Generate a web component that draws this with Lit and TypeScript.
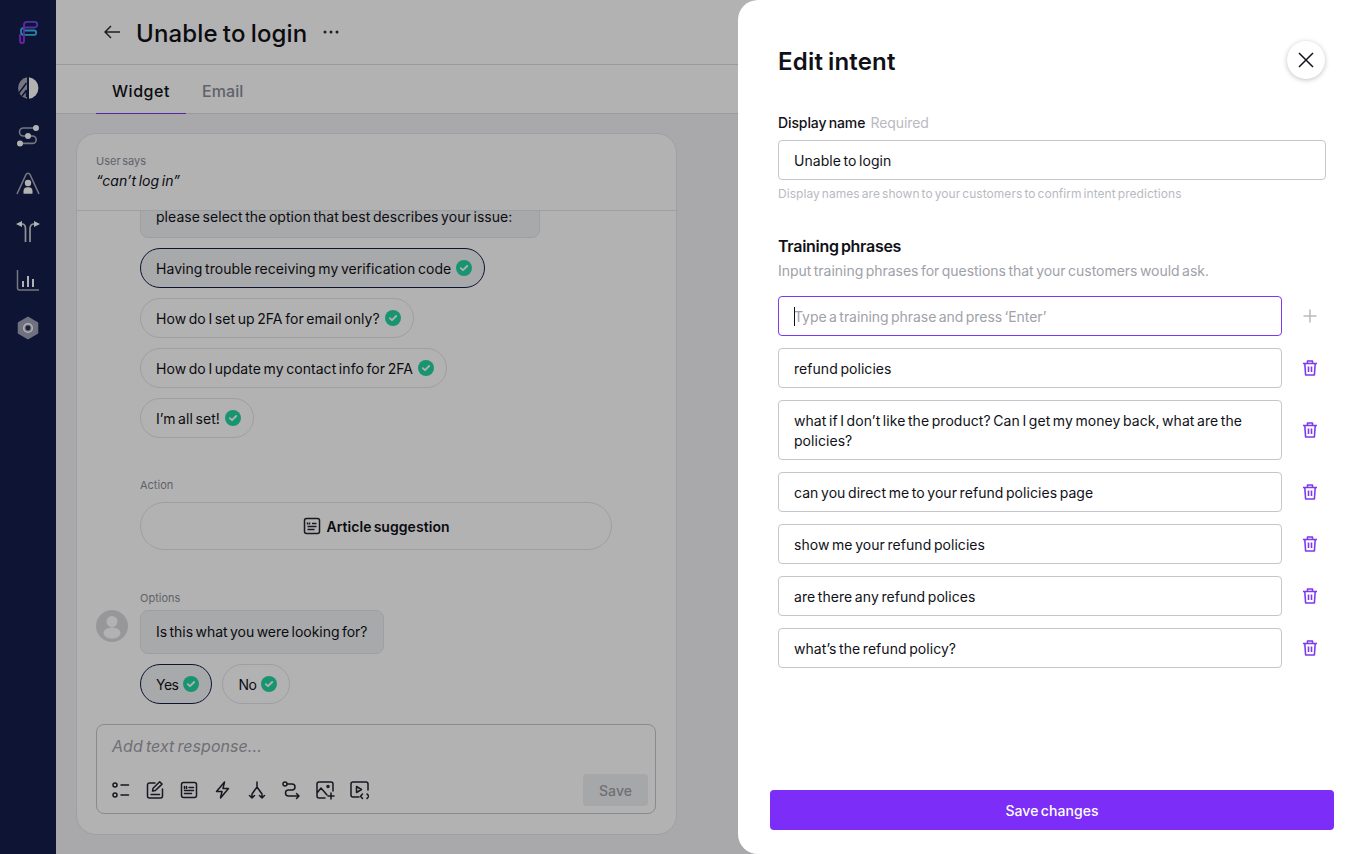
import { LitElement, html, css, svg } from 'lit';
import { customElement } from 'lit/decorators.js';
import { classMap } from 'lit/directives/class-map.js';

const check = html`<svg class="check" width="16" height="16" viewBox="0 0 16 16">
	<circle cx="8" cy="8" r="8" fill="#24d4a2"></circle>
	<path d="M4.8 8.2 7 10.2 11.2 6" fill="none" stroke="#fff" stroke-width="1.8" stroke-linecap="round" stroke-linejoin="round"></path>
</svg>`;

const trash = html`<svg width="16" height="16" viewBox="0 0 16 16" fill="none" stroke="#7c3aed" stroke-width="1.6" stroke-linejoin="round">
	<path d="M1 3.500h14M5.500 3.500V1h5v2.500M2.800 3.500l.8 11.500h8.800l.8-11.500M6.500 6.500v5.500M9.500 6.500v5.500"></path>
</svg>`;

const articleIcon = svg`<rect x="2.500" y="2.500" width="15" height="15" rx="2"></rect><path d="M5.500 6.500v2M7.500 6.500v2M10 7.500h4.500M5.500 10.500h9M5.500 13.500h7"></path>`;

const navIcons = [
	svg`<path d="M11 1.200A11 11 0 0 0 11 22.800Z" fill="#a8aab8"></path><path d="M13 1.200A10.900 10.900 0 0 1 13 22.800Z" fill="#fff"></path><path d="M10.500 7 3 17M10.500 14 6 20M10.500 14v7" stroke="#151e49" stroke-width="1.500" fill="none"></path>`,
	svg`<path d="M20 4H7.500a4 4 0 0 0 0 8H16.500a3.700 3.700 0 0 1 0 7.400H4" fill="none" stroke="#a8aab8" stroke-width="1.600"></path><circle cx="20" cy="4" r="3" fill="#fff"></circle><circle cx="12" cy="12" r="3" fill="#fff"></circle><circle cx="4" cy="19.400" r="3" fill="#fff"></circle>`,
	svg`<path d="M1 22 10 2.500a2.200 2.200 0 0 1 4 0L23 22" fill="none" stroke="#a8aab8" stroke-width="1.600"></path><circle cx="12" cy="11" r="3.200" fill="#fff"></circle><path d="M7.500 21.800v-2.600a4 4 0 0 1 4-4h1a4 4 0 0 1 4 4v2.600Z" fill="#fff"></path>`,
	svg`<path d="M0 4 6 1v6ZM24 4l-6-3v6Z" fill="#fff"></path><path d="M9.500 22V9Q9.500 4 6 4M14 22V9Q14 4 18 4" fill="none" stroke="#d0d1d8" stroke-width="1.700"></path>`,
	svg`<path d="M1.500 2v18a2 2 0 0 0 2 2H23" fill="none" stroke="#a8aab8" stroke-width="1.500"></path><path d="M7 13v6M12 8v11M17 11v8" fill="none" stroke="#fff" stroke-width="2"></path>`,
	svg`<path d="M12 1.500 21.500 6.800v10.400L12 22.500 2.500 17.200V6.800Z" fill="#a0a3b8" stroke="#a0a3b8" stroke-width="1.500" stroke-linejoin="round"></path><circle cx="12" cy="12" r="4.300" fill="none" stroke="#fff" stroke-width="1.600"></circle><circle cx="12" cy="12" r="2.400" fill="#2a2f4e"></circle>`,
];

const toolIcons = [
	svg`<circle cx="4" cy="5" r="2"></circle><circle cx="4" cy="15" r="2"></circle><path d="M10 5h7.500M10 15h7.500"></path>`,
	svg`<path d="M10 3H4.500a2 2 0 0 0-2 2v11a2 2 0 0 0 2 2h11a2 2 0 0 0 2-2V9M6 14.500h8.500M7.500 11l.6-2.800 6.600-6.400 2.300 2.300-6.600 6.400Z"></path>`,
	articleIcon,
	svg`<path d="M11.500 2 3.500 11.500H9L7.500 18l8-9.500H10Z"></path>`,
	svg`<path d="M10 2v5M10 7 5 14M10 7l5 7M5 18v-4M2.500 15.500 5 18l2.500-2.500M15 18v-4M12.500 15.500 15 18l2.500-2.500"></path>`,
	svg`<circle cx="4" cy="4" r="2"></circle><path d="M6 4h5a3 3 0 0 1 3 3 3 3 0 0 1-3 3H7.500a2.800 2.800 0 0 0 0 6H18M15.500 13.500 18 16l-2.500 2.500"></path>`,
	svg`<path d="M10 18H4a2 2 0 0 1-2-2V4a2 2 0 0 1 2-2h12a2 2 0 0 1 2 2v7M2 13l4-5 6 7"></path><circle cx="13" cy="6.500" r="1"></circle><path d="M16 13v6M13 16h6"></path>`,
	svg`<path d="M10 17H4a2 2 0 0 1-2-2V4a2 2 0 0 1 2-2h13a2 2 0 0 1 2 2v6M7.500 6.500v6l5-3Z"></path><path d="M13.500 14 11.500 16.200l2 2.200M18 14l2 2.200-2 2.200"></path>`,
];

const options = [
	{ label: 'Having trouble receiving my verification code', active: true },
	{ label: 'How do I set up 2FA for email only?', active: false },
	{ label: 'How do I update my contact info for 2FA', active: false },
	{ label: 'I’m all set!', active: false },
];

const phrases = [
	'refund policies',
	'what if I don’t like the product? Can I get my money back, what are the policies?',
	'can you direct me to your refund policies page',
	'show me your refund policies',
	'are there any refund polices',
	'what’s the refund policy?',
];

@customElement('app-root')
export class AppRoot extends LitElement {
	private pill(label: string, active: boolean) {
		return html`<div class=${classMap({ pill: true, 'pill--active': active })}>${label} ${check}</div>`;
	}

	private renderSidebar() {
		return html`<nav class="sidebar">
			<svg class="logo" width="24" height="24" viewBox="16 20 24 24" fill="none" stroke-width="1.800" stroke-linecap="round">
				<defs>
					<linearGradient id="fg" x1="0" y1="1" x2="1" y2="0">
						<stop offset="0" stop-color="#a42bf0"></stop>
						<stop offset="1" stop-color="#6a4df5"></stop>
					</linearGradient>
				</defs>
				<path d="M24 30.500H34a2.200 2.200 0 0 1 0 4.400H24a3 3 0 0 1-3-3v-1a3 3 0 0 1 3-3" stroke="#33c0ee"></path>
				<path d="M24 27.500 H34.500a2.800 2.800 0 0 0 0-5.600H27a3 3 0 0 0-3 3V41a2 2 0 0 1-4 0V35" stroke="url(#fg)"></path>
			</svg>
			${navIcons.map((icon) => html`<svg width="24" height="24" viewBox="0 0 24 24">${icon}</svg>`)}
		</nav>`;
	}

	private renderComposer() {
		return html`<div class="composer">
			<div class="composer__hint">Add text response...</div>
			<div class="composer__bar">
				<div class="tools">
					${toolIcons.map((icon) => html`<svg width="20" height="20" viewBox="0 0 20 20" fill="none" stroke="#22232e" stroke-width="1.500" stroke-linecap="round" stroke-linejoin="round">${icon}</svg>`)}
				</div>
				<button class="composer__save">Save</button>
			</div>
		</div>`;
	}

	private renderMain() {
		return html`<main class="main">
			<header class="head">
				<svg width="16" height="14" viewBox="0 0 16 14" fill="none" stroke="#2b2c3a" stroke-width="1.500"><path d="M16 7H1M7 1 1 7l6 6"></path></svg>
				<h1>Unable to login</h1>
				<svg width="16" height="4" viewBox="0 0 16 4" fill="#2b2c3a"><circle cx="2" cy="2" r="1.500"></circle><circle cx="8" cy="2" r="1.500"></circle><circle cx="14" cy="2" r="1.500"></circle></svg>
			</header>
			<div class="tabs">
				<div class="tab tab--on">Widget</div>
				<div class="tab">Email</div>
			</div>
			<div class="content">
				<section class="card">
					<div class="card__top">
						<div class="small">User says</div>
						<div class="quote">“can’t log in”</div>
					</div>
					<div class="chat">
						<div class="thread">
							<div class="bubble bubble--top">please select the option that best describes your issue:</div>
							${options.map((o) => this.pill(o.label, o.active))}
							<div class="small small--action">Action</div>
							<div class="action">
								<svg width="20" height="20" viewBox="0 0 20 20" fill="none" stroke="#22232e" stroke-width="1.500">${articleIcon}</svg>
								Article suggestion
							</div>
							<div class="small small--options">Options</div>
							<div class="bubble bubble--short">
								<svg class="avatar" width="32" height="32" viewBox="0 0 32 32">
									<circle cx="16" cy="16" r="16" fill="#d9d9dd"></circle>
									<circle cx="16" cy="11.500" r="5.500" fill="#fff"></circle>
									<ellipse cx="16" cy="23" rx="8.500" ry="5.500" fill="#fff"></ellipse>
								</svg>
								Is this what you were looking for?
							</div>
							<div class="answers">${this.pill('Yes', true)}${this.pill('No', false)}</div>
						</div>
					</div>
					${this.renderComposer()}
				</section>
			</div>
		</main>`;
	}

	private renderDrawer() {
		return html`<aside class="drawer">
			<div class="drawer__body">
				<div class="drawer__head">
					<h2>Edit intent</h2>
					<button class="close" aria-label="Close">
						<svg width="16" height="16" viewBox="0 0 16 16" fill="none" stroke="#12131c" stroke-width="1.500"><path d="M1 1l14 14M15 1 1 15"></path></svg>
					</button>
				</div>
				<div class="label">Display name <span>Required</span></div>
				<div class="field">Unable to login</div>
				<div class="helper">Display names are shown to your customers to confirm intent predictions</div>
				<h3>Training phrases</h3>
				<div class="sub">Input training phrases for questions that your customers would ask.</div>
				<div class="phrases">
					<div class="row">
						<div class="field field--focus"><i class="caret"></i>Type a training phrase and press ‘Enter’</div>
						<svg class="row__icon" width="16" height="16" viewBox="0 0 16 16" fill="none" stroke="#b9babf" stroke-width="1.500"><path d="M8 1.500v13M1.500 8h13"></path></svg>
					</div>
					${phrases.map((p) => html`<div class="row">
						<div class="field">${p}</div>
						<span class="row__icon">${trash}</span>
					</div>`)}
				</div>
			</div>
			<div class="drawer__foot"><button class="primary">Save changes</button></div>
		</aside>`;
	}

	render() {
		return html`<div class="page">${this.renderSidebar()}${this.renderMain()}</div>
			<div class="scrim"></div>
			${this.renderDrawer()}`;
	}

	static styles = css`
		* {
			box-sizing: border-box;
		}

		:host {
			display: block;
			position: relative;
			height: 100vh;
			overflow: hidden;
			font-family: Inter, 'Noto Sans', sans-serif;
			font-size: 14px;
			letter-spacing: 0.05px;
			word-spacing: -0.1em;
			color: #101118;
		}

		h1,
		h2,
		h3 {
			margin: 0;
		}

		button {
			font: inherit;
			letter-spacing: inherit;
			word-spacing: inherit;
			border: 0;
		}

		.page {
			display: flex;
			height: 100%;
		}

		.sidebar {
			flex: 0 0 56px;
			display: flex;
			flex-direction: column;
			align-items: center;
			gap: 24px;
			padding-top: 20px;
			background: #151e49;
		}

		.logo {
			margin-bottom: 8px;
		}

		.main {
			flex: 1;
			min-width: 0;
			display: flex;
			flex-direction: column;
			background: #f2f3f5;
		}

		.head {
			flex: 0 0 65px;
			display: flex;
			align-items: center;
			padding-left: 48px;
			background: #fff;
			border-bottom: 1px solid #dcdde3;
		}

		.head h1 {
			margin: 0 16px;
			padding-top: 2px;
			font-size: 24px;
			font-weight: 500;
			letter-spacing: 0.15px;
		}

		.tabs {
			flex: 0 0 49px;
			display: flex;
			padding-left: 40px;
			background: #fff;
			border-bottom: 1px solid #dcdde3;
		}

		.tab {
			padding: 16px 16px 0;
			margin-bottom: -1px;
			font-size: 16px;
			font-weight: 500;
			color: #8b8d98;
			border-bottom: 1px solid transparent;
		}

		.tab--on {
			letter-spacing: 0.55px;
			color: #101118;
			border-bottom-color: #7c3aed;
		}

		.content {
			flex: 1;
			min-height: 0;
			padding: 19px 0 19px 20px;
		}

		.card {
			width: 601px;
			height: 100%;
			display: flex;
			flex-direction: column;
			background: #fff;
			border: 1px solid #e3e4e9;
			border-radius: 20px;
		}

		.card__top {
			flex: 0 0 77px;
			padding: 19px 19px 0;
			border-bottom: 1px solid #e3e4e9;
		}

		.small {
			font-size: 11px;
			line-height: 16px;
			letter-spacing: 0;
			color: #8b8d98;
		}

		.quote {
			margin-top: 2px;
			font-style: italic;
			line-height: 20px;
		}

		.chat {
			flex: 1;
			min-height: 0;
			overflow: hidden;
			display: flex;
			flex-direction: column;
			justify-content: flex-end;
			padding: 0 19px;
		}

		.thread {
			display: flex;
			flex-direction: column;
			align-items: flex-start;
			gap: 10px;
			padding-left: 44px;
			padding-bottom: 20px;
		}

		.bubble {
			position: relative;
			padding: 11px 15px;
			line-height: 20px;
			background: #f1f2f4;
			border: 1px solid #e3e4e9;
			border-radius: 8px;
		}

		.bubble--top {
			width: 400px;
			padding: 12px 15px 10px;
		}

		.bubble--short {
			width: 244px;
			letter-spacing: -0.04px;
			white-space: nowrap;
		}

		.avatar {
			position: absolute;
			left: -45px;
			top: -1px;
		}

		.pill {
			display: flex;
			align-items: center;
			gap: 5px;
			height: 40px;
			padding: 0 12px 0 15px;
			background: #fff;
			border: 1px solid #e3e4e9;
			border-radius: 20px;
			white-space: nowrap;
		}

		.pill--active {
			background: #f1f2f4;
			border-color: #151e49;
		}

		.small--action {
			margin-top: 29px;
			margin-bottom: -1px;
		}

		.small--options {
			margin-top: 30px;
			margin-bottom: -6px;
		}

		.action {
			display: flex;
			align-items: center;
			justify-content: center;
			gap: 4px;
			width: 472px;
			height: 48px;
			font-weight: 600;
			background: #fff;
			border: 1px solid #e3e4e9;
			border-radius: 24px;
		}

		.answers {
			display: flex;
			gap: 10px;
		}

		.answers .pill {
			letter-spacing: -0.5px;
		}

		.composer {
			flex: 0 0 90px;
			margin: 0 20px 20px 19px;
			padding: 10px 7px 7px 15px;
			display: flex;
			flex-direction: column;
			justify-content: space-between;
			border: 1px solid #c5c6cc;
			border-radius: 8px;
		}

		.composer__hint {
			font-size: 16px;
			font-style: italic;
			line-height: 22px;
			color: #9fa0a8;
		}

		.composer__bar {
			display: flex;
			align-items: center;
			justify-content: space-between;
		}

		.tools {
			display: flex;
			gap: 14px;
			margin-left: -1px;
		}

		.composer__save {
			width: 65px;
			height: 32px;
			color: #a0a1a9;
			font-weight: 500;
			background: #eeeff1;
			border-radius: 4px;
		}

		.scrim {
			position: absolute;
			inset: 0;
			background: rgba(0, 0, 0, 0.3);
		}

		.drawer {
			position: absolute;
			top: 0;
			right: 0;
			bottom: 0;
			width: 628px;
			display: flex;
			flex-direction: column;
			background: #fff;
			border-radius: 20px 0 0 20px;
		}

		.drawer__body {
			flex: 1;
			padding: 40px 40px 0;
		}

		.drawer__head {
			display: flex;
			align-items: center;
			justify-content: space-between;
			height: 40px;
			margin-bottom: 33px;
		}

		.drawer__head h2 {
			padding-top: 2px;
			font-size: 24px;
			font-weight: 600;
			letter-spacing: 0.2px;
		}

		.close {
			display: flex;
			align-items: center;
			justify-content: center;
			width: 38px;
			height: 38px;
			margin-right: 1px;
			background: #fff;
			border-radius: 50%;
			box-shadow: 0 1px 5px rgba(0, 0, 0, 0.25);
		}

		.label {
			font-weight: 500;
			line-height: 20px;
			letter-spacing: -0.1px;
			margin-bottom: 7px;
		}

		.label span {
			margin-left: 3px;
			font-weight: 400;
			color: #b9babf;
		}

		.field {
			flex: 1;
			min-height: 40px;
			padding: 10px 15px 8px;
			line-height: 20px;
			background: #fff;
			border: 1px solid #c5c6cc;
			border-radius: 4px;
		}

		.field--focus {
			position: relative;
			letter-spacing: -0.05px;
			color: #a0a1a9;
			border-color: #7c3aed;
		}

		.caret {
			position: absolute;
			left: 15px;
			top: 10px;
			width: 1px;
			height: 19px;
			background: #101118;
		}

		.helper {
			margin-top: 6px;
			font-size: 12px;
			line-height: 16px;
			color: #b9babf;
		}

		h3 {
			margin-top: 32px;
			font-size: 16px;
			font-weight: 600;
			line-height: 24px;
			letter-spacing: -0.3px;
		}

		.sub {
			margin-top: 3px;
			line-height: 20px;
			letter-spacing: -0.03px;
			color: #a0a1a9;
		}

		.phrases {
			display: flex;
			flex-direction: column;
			gap: 12px;
			margin-top: 15px;
		}

		.row {
			display: flex;
			align-items: center;
			margin-right: -12px;
		}

		.row__icon {
			display: flex;
			flex: 0 0 56px;
			justify-content: center;
		}

		.drawer__foot {
			padding: 0 32px 24px;
		}

		.primary {
			width: 100%;
			height: 40px;
			color: #fff;
			font-weight: 500;
			background: #7c2df8;
			border-radius: 4px;
		}
	`;
}
